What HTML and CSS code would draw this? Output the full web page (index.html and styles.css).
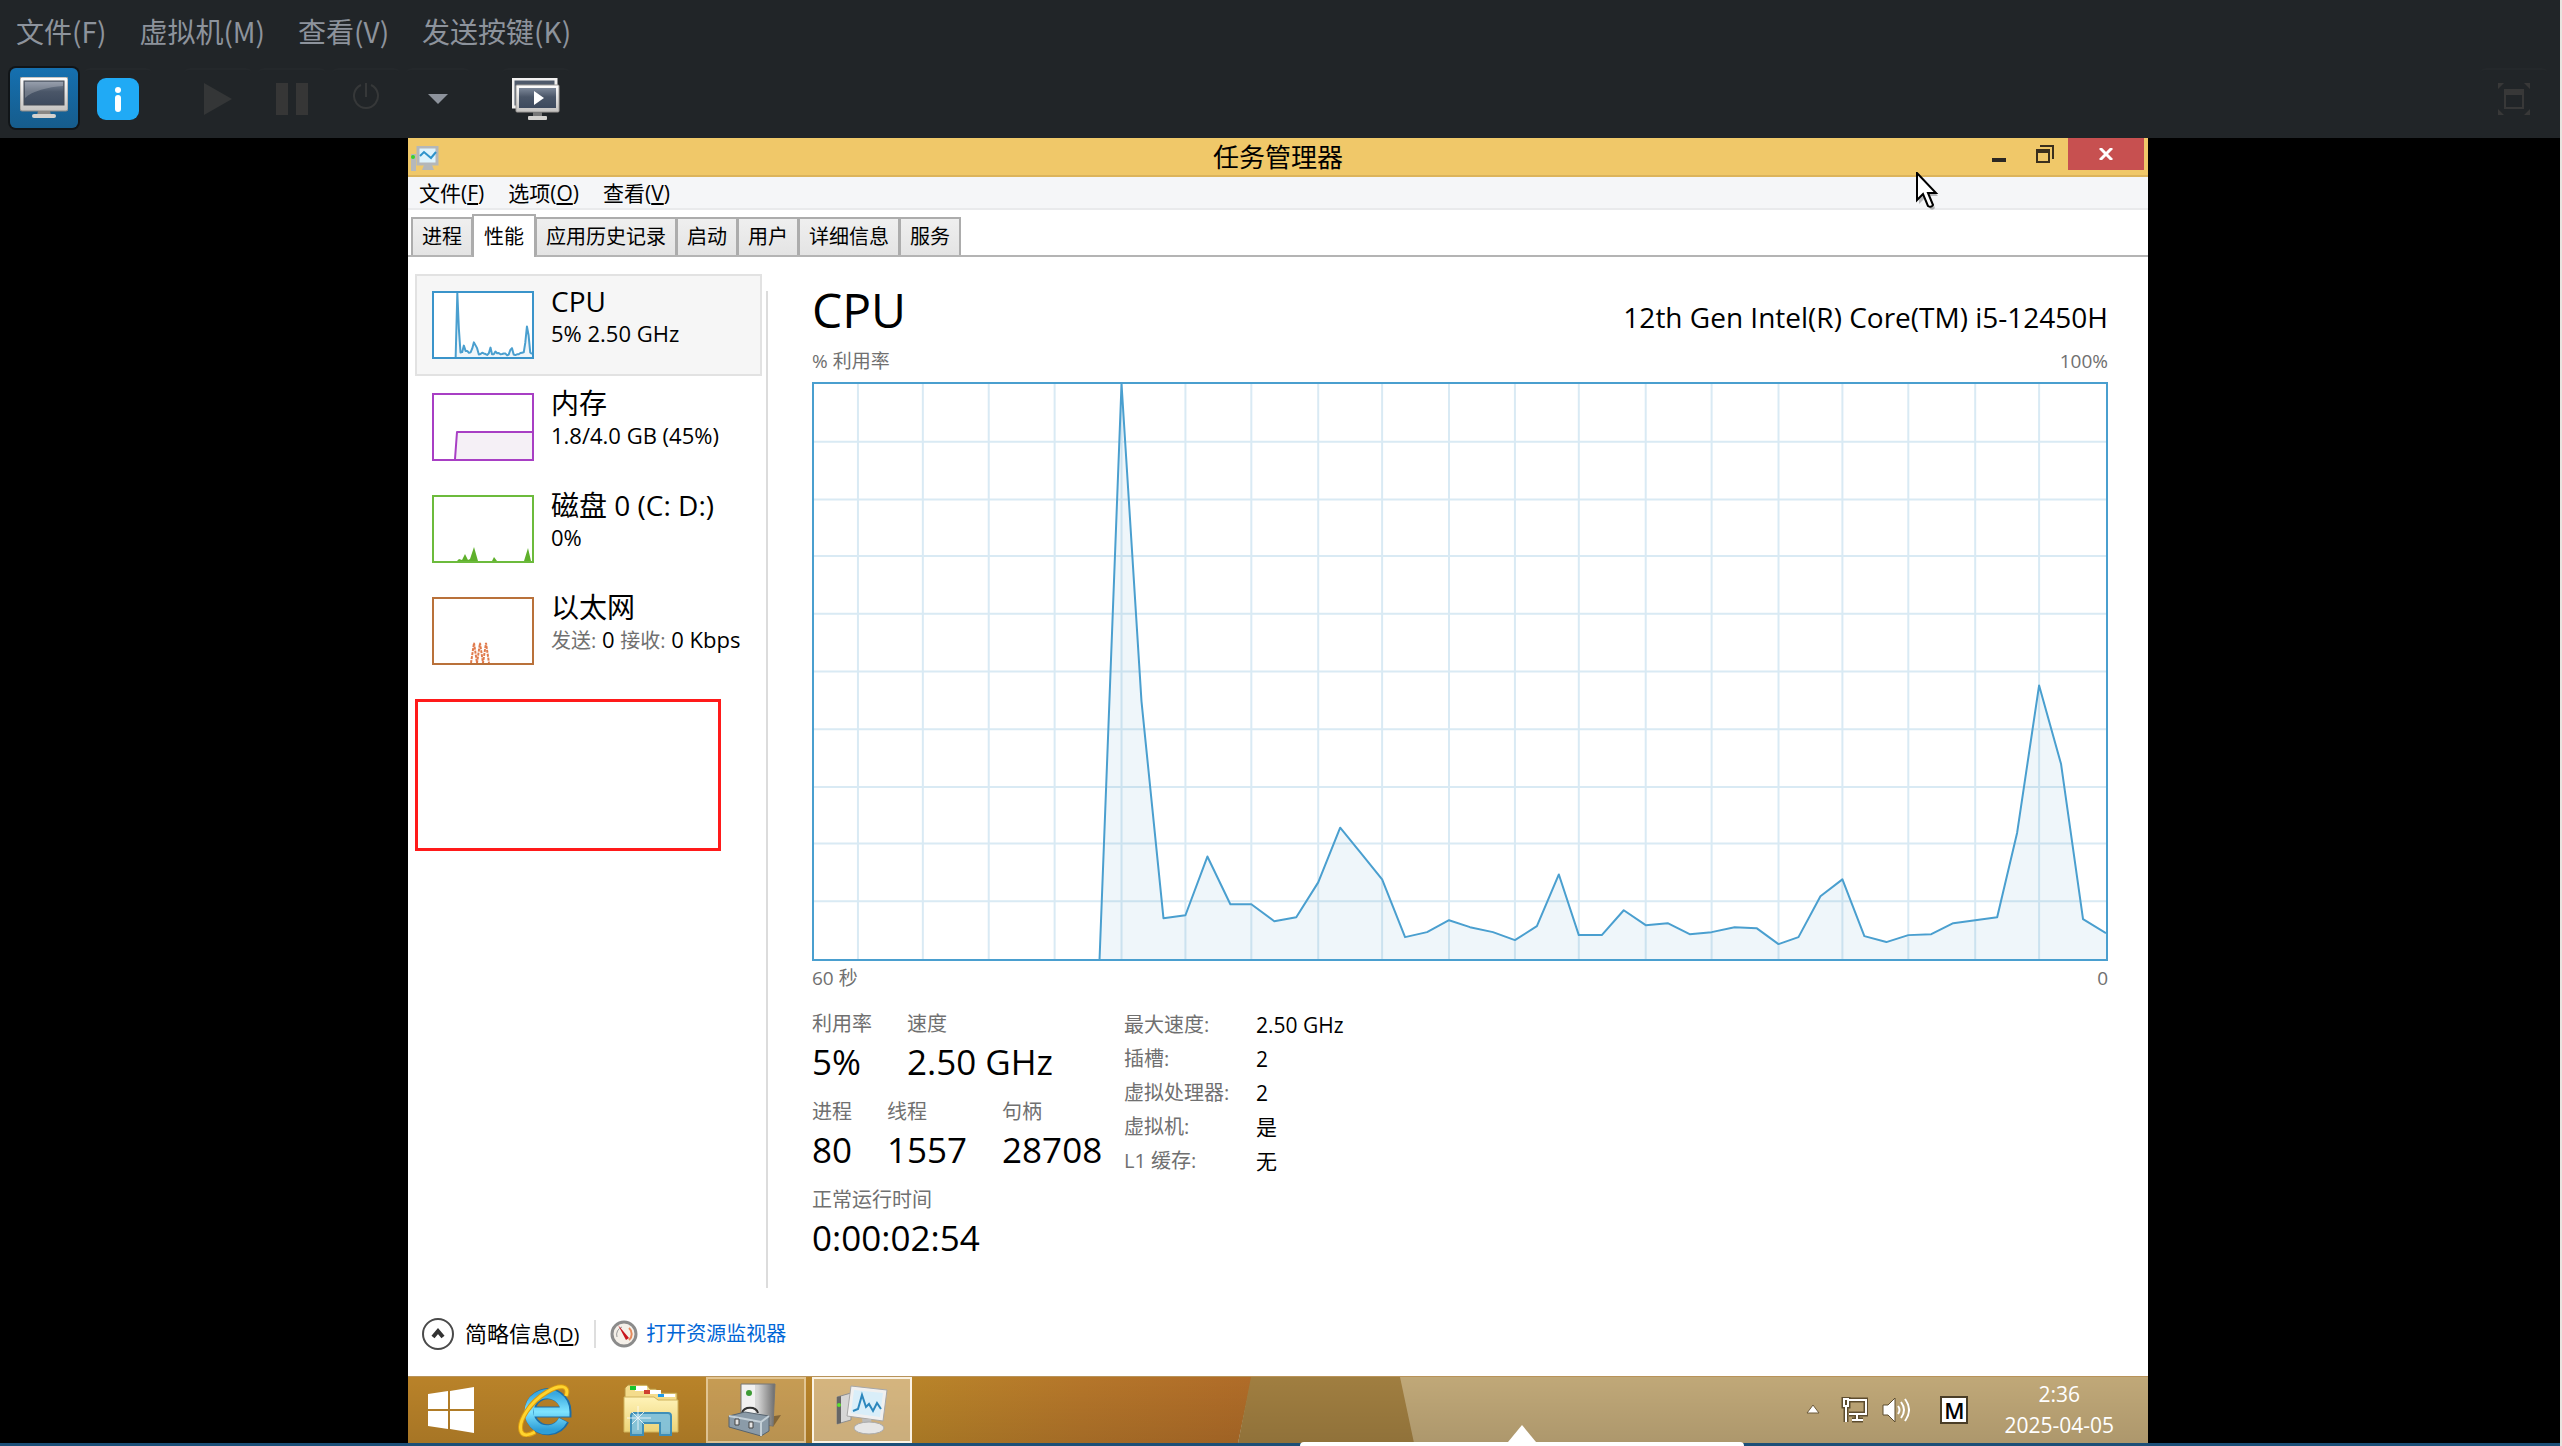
FILE: index.html
```html
<!DOCTYPE html>
<html lang="zh-CN">
<head>
  <meta charset="UTF-8">
  <meta name="viewport" content="width=device-width, initial-scale=1">
  <title>任务管理器</title>
  <link rel="stylesheet" href="styles.css">
</head>
<body>
  <!-- Shared gradients and the CPU curve -->
  <svg class="defs" aria-hidden="true">
    <defs>
      <linearGradient id="frame" x1="0" y1="0" x2="0" y2="1"><stop offset="0" stop-color="#ffffff"/><stop offset="1" stop-color="#c4c2c0"/></linearGradient>
      <linearGradient id="screen" x1="0" y1="0" x2="0" y2="1"><stop offset="0" stop-color="#7d8899"/><stop offset=".45" stop-color="#4a5668"/><stop offset="1" stop-color="#3d4a5e"/></linearGradient>
      <linearGradient id="ie" x1="0" y1="0" x2="0" y2="1"><stop offset="0" stop-color="#39a8e0"/><stop offset=".5" stop-color="#7fe4ff"/><stop offset="1" stop-color="#2f9fd8"/></linearGradient>
      <linearGradient id="folder" x1="0" y1="0" x2="0" y2="1"><stop offset="0" stop-color="#fff3b8"/><stop offset="1" stop-color="#ecd377"/></linearGradient>
      <linearGradient id="metal" x1="0" y1="0" x2="1" y2="0"><stop offset="0" stop-color="#f2f2f2"/><stop offset=".5" stop-color="#d4d4d4"/><stop offset="1" stop-color="#6c6c6c"/></linearGradient>
      <g id="cpu-curve">
        <polygon class="area" points="286,578 308,0 328,319 350,537 372,534 394,475 417,523 438,523 461,540 483,536 505,501 527,446 549,473 569,498 592,556 614,551 636,539 657,546 680,551 702,559 724,545 746,493 766,554 789,554 811,529 833,544 855,542 877,553 899,551 922,546 944,547 966,563 986,556 1008,515 1030,498 1052,555 1074,561 1096,554 1119,553 1141,542 1163,539 1185,536 1205,451 1227,303 1249,382 1271,538 1294,552 1294,578"/>
        <polyline class="line" points="286,578 308,0 328,319 350,537 372,534 394,475 417,523 438,523 461,540 483,536 505,501 527,446 549,473 569,498 592,556 614,551 636,539 657,546 680,551 702,559 724,545 746,493 766,554 789,554 811,529 833,544 855,542 877,553 899,551 922,546 944,547 966,563 986,556 1008,515 1030,498 1052,555 1074,561 1096,554 1119,553 1141,542 1163,539 1185,536 1205,451 1227,303 1249,382 1271,538 1294,552"/>
      </g>
    </defs>
  </svg>

  <header class="host">
    <nav class="host-menu">
      <button>文件(F)</button>
      <button>虚拟机(M)</button>
      <button>查看(V)</button>
      <button>发送按键(K)</button>
    </nav>
    <div class="host-tools">
      <button class="tool active" aria-label="控制台">
        <svg width="48" height="42" viewBox="0 0 48 42"><rect x="0" y="0" width="48" height="34" rx="2" fill="url(#frame)" stroke="#8d8a86"/><rect x="4" y="4" width="40" height="24" fill="url(#screen)" stroke="#454b55"/><path d="M5 5h38v4C28 10 12 14 5 21z" fill="#fff" opacity=".22"/><path d="M18 34h12l1 4H17z" fill="#8a8784"/><rect x="12" y="37" width="24" height="4" rx="2" fill="#d3d1ce"/></svg>
      </button>
      <button class="tool" aria-label="详情">
        <svg width="42" height="42" viewBox="0 0 42 42"><rect width="42" height="42" rx="9" fill="#20aaf5"/><circle cx="21" cy="12" r="3" fill="#fff"/><path d="M21 20v11" stroke="#fff" stroke-width="6" stroke-linecap="round"/></svg>
      </button>
      <button class="tool gap" aria-label="运行">
        <svg width="28" height="32" viewBox="0 0 28 32"><path d="M0 0l28 16L0 32z" fill="#343637"/></svg>
      </button>
      <button class="tool" aria-label="暂停">
        <svg width="32" height="32" viewBox="0 0 32 32"><path d="M0 0h12v32H0zM20 0h12v32H20z" fill="#363636"/></svg>
      </button>
      <button class="tool power" aria-label="关机">
        <svg width="28" height="28" viewBox="0 0 28 28" fill="none" stroke="#363839" stroke-width="2"><path d="M14 1v14M9 3a12 12 0 1 0 10 0"/></svg>
      </button>
      <button class="tool arrow" aria-label="关机菜单">
        <svg width="20" height="10" viewBox="0 0 20 10"><path d="M0 0h20L10 10z" fill="#8d939c"/></svg>
      </button>
      <button class="tool gap" aria-label="快照">
        <svg width="48" height="42" viewBox="0 0 48 42"><rect x="1" y="1" width="43" height="28" fill="#4f5a6b" stroke="#f1f0ef" stroke-width="3"/><rect x="4" y="7" width="43" height="27" rx="1" fill="url(#frame)" stroke="#9d9a97"/><rect x="7" y="10" width="37" height="20" fill="url(#screen)"/><path d="M22 13l10 7-10 7z" fill="#fff"/><path d="M21 34h9v4h-9z" fill="#777"/><rect x="16" y="38" width="19" height="4" rx="1" fill="#d3d1ce"/></svg>
      </button>
      <button class="tool last" aria-label="全屏">
        <svg width="32" height="32" viewBox="0 0 32 32" fill="#383838"><path d="M0 0h6L0 6zM26 0h6v6zM0 26l6 6H0zM32 26v6h-6z"/><path fill-rule="evenodd" d="M6 6h20v20H6zM8 12v12h16V12z"/></svg>
      </button>
    </div>
  </header>

  <main class="stage">
    <div class="vm">
      <div class="titlebar">
        <svg class="app-icon" width="28" height="26" viewBox="0 0 28 26"><rect x="0" y="8" width="5" height="17" fill="#b5b8ba"/><circle cx="2" cy="11" r="2" fill="#37d12c"/><rect x="7" y="1" width="19" height="17" fill="#dff3fc" stroke="#b4b7b9" stroke-width="3"/><path d="M9 10l4-4 7 6 5-6" fill="none" stroke="#2e93cb" stroke-width="2"/><path d="M13 19h8l2 5H11z" fill="#b4b7b9"/></svg>
        <h1>任务管理器</h1>
        <div class="win-buttons">
          <button aria-label="最小化"><svg width="14" height="20" viewBox="0 0 14 20"><path d="M0 14h14v4H0z" fill="#2b2723"/></svg></button>
          <button aria-label="还原"><svg width="18" height="18" viewBox="0 0 18 18" fill="none" stroke="#3a2f1d" stroke-width="2"><path d="M4 1h13v13"/><path d="M1 5h12v12H1zM1 7h12"/></svg></button>
          <button class="close" aria-label="关闭"><svg width="14" height="12" viewBox="0 0 14 12"><path d="M1 0l12 12M13 0L1 12" stroke="#fff" stroke-width="3"/></svg></button>
        </div>
      </div>
      <nav class="menubar">
        <button>文件(<u>F</u>)</button>
        <button>选项(<u>O</u>)</button>
        <button>查看(<u>V</u>)</button>
      </nav>
      <div class="tabs" role="tablist">
        <button role="tab">进程</button>
        <button role="tab" class="selected" aria-selected="true">性能</button>
        <button role="tab">应用历史记录</button>
        <button role="tab">启动</button>
        <button role="tab">用户</button>
        <button role="tab">详细信息</button>
        <button role="tab">服务</button>
      </div>

      <div class="content">
        <aside class="sidebar">
          <button class="item current">
            <svg class="mini cpu" viewBox="0 0 1294 578" preserveAspectRatio="none"><use href="#cpu-curve"/></svg>
            <span class="info"><span class="name">CPU</span><span class="detail">5% 2.50 GHz</span></span>
          </button>
          <button class="item">
            <svg class="mini mem" viewBox="0 0 98 64"><path class="area" d="M21 64l2-27h75v27z"/><path class="line" d="M21 64l2-27h75"/></svg>
            <span class="info"><span class="name">内存</span><span class="detail">1.8/4.0 GB (45%)</span></span>
          </button>
          <button class="item">
            <svg class="mini disk" viewBox="0 0 98 64"><path class="spikes" d="M23 64l2-2 3 1 3-6 3 6 2-1 4-12 4 14zM58 64l2-4 3 4zM90 64l4-13 3 13z"/></svg>
            <span class="info"><span class="name">磁盘 0 (C: D:)</span><span class="detail">0%</span></span>
          </button>
          <button class="item">
            <svg class="mini net" viewBox="0 0 98 64"><path class="dots" d="M37 64l3-20 3 20 3-20 3 20 3-20 3 20"/></svg>
            <span class="info"><span class="name">以太网</span><span class="detail"><i>发送:</i> 0 <i>接收:</i> 0 Kbps</span></span>
          </button>
          <div class="marker"></div>
        </aside>

        <section class="panel">
          <div class="heading">
            <h2>CPU</h2>
            <p>12th Gen Intel(R) Core(TM) i5-12450H</p>
          </div>
          <div class="axis top"><span>% 利用率</span><span>100%</span></div>
          <svg class="chart" viewBox="0 0 1294 578" preserveAspectRatio="none">
            <path class="grid" d="M44 0v578M109 0v578M175 0v578M241 0v578M308 0v578M372 0v578M438 0v578M505 0v578M569 0v578M636 0v578M702 0v578M766 0v578M833 0v578M899 0v578M966 0v578M1030 0v578M1096 0v578M1163 0v578M1227 0v578M0 58h1294M0 116h1294M0 173h1294M0 231h1294M0 289h1294M0 347h1294M0 405h1294M0 462h1294M0 520h1294"/>
            <use href="#cpu-curve"/>
          </svg>
          <div class="axis bottom"><span>60 秒</span><span>0</span></div>
          <div class="stats">
            <div class="numbers">
              <dl class="row">
                <div><dt>利用率</dt><dd>5%</dd></div>
                <div><dt>速度</dt><dd>2.50 GHz</dd></div>
              </dl>
              <dl class="row">
                <div><dt>进程</dt><dd>80</dd></div>
                <div><dt>线程</dt><dd>1557</dd></div>
                <div><dt>句柄</dt><dd>28708</dd></div>
              </dl>
              <dl class="row">
                <div><dt>正常运行时间</dt><dd>0:00:02:54</dd></div>
              </dl>
            </div>
            <table class="specs">
              <tr><th scope="row">最大速度:</th><td>2.50 GHz</td></tr>
              <tr><th scope="row">插槽:</th><td>2</td></tr>
              <tr><th scope="row">虚拟处理器:</th><td>2</td></tr>
              <tr><th scope="row">虚拟机:</th><td>是</td></tr>
              <tr><th scope="row">L1 缓存:</th><td>无</td></tr>
            </table>
          </div>
        </section>
      </div>

      <footer class="statusbar">
        <button>
          <svg width="34" height="34" viewBox="0 0 34 34" fill="none"><circle cx="17" cy="17" r="15" stroke="#4a4a4a" stroke-width="2"/><path d="M12 20l5-6 5 6" stroke="#333" stroke-width="4"/></svg>
          <span class="fewer">简略信息<small>(<u>D</u>)</small></span>
        </button>
        <a href="#">
          <svg width="28" height="28" viewBox="0 0 28 28"><circle cx="14" cy="14" r="12" fill="#f4efe8" stroke="#8b8b8b" stroke-width="3"/><path d="M7 17a8 8 0 0 1 5-10" fill="none" stroke="#999"/><path d="M19 8a8 8 0 0 1 0 12" fill="none" stroke="#e58a5c" stroke-width="2"/><path d="M8 5l11 13-3 2z" fill="#c8141c"/></svg>
          <span>打开资源监视器</span>
        </a>
      </footer>

      <div class="taskbar">
        <svg class="wallpaper" viewBox="0 0 1740 67" preserveAspectRatio="none">
          <defs>
            <linearGradient id="gold" x1="0" y1="0" x2="1" y2="0"><stop offset="0" stop-color="#b98229"/><stop offset=".6" stop-color="#b98429"/><stop offset=".8" stop-color="#b5762a"/><stop offset="1" stop-color="#b06c28"/></linearGradient>
            <linearGradient id="shade" x1="0" y1="0" x2="0" y2="1"><stop offset="0" stop-opacity="0"/><stop offset="1" stop-opacity=".1"/></linearGradient>
          </defs>
          <path d="M0 0h844l-14 67H0z" fill="url(#gold)"/>
          <path d="M843 0h150l14 67H830z" fill="#a07e40"/>
          <path d="M992 0h748v67H1006z" fill="#c0a878"/>
          <path d="M0 0h1740v67H0z" fill="url(#shade)"/>
        </svg>
        <button class="launch" aria-label="开始">
          <svg width="46" height="46" viewBox="0 0 46 46" fill="#fff"><path d="M0 7l20-3v18H0zM22 4l24-4v22H22zM0 24h20v18L0 39zM22 24h24v22l-24-4z"/></svg>
        </button>
        <button class="launch" aria-label="Internet Explorer">
          <svg width="54" height="54" viewBox="0 0 54 54" fill="none"><path d="M46 37a18 18 0 1 1 2-8H16" stroke="#1c6ea8" stroke-width="11"/><path d="M45 37a18 18 0 1 1 2-8H16" stroke="url(#ie)" stroke-width="9"/><path d="M48 13C52 2 42 1 29 9 12 19 0 38 3 48c2 6 9 4 14 1" stroke="#d99a10" stroke-width="5"/><path d="M48 13C52 2 42 1 29 9 12 19 0 38 3 48c2 6 9 4 14 1" stroke="#ffd42e" stroke-width="3"/></svg>
        </button>
        <button class="launch" aria-label="文件资源管理器">
          <svg width="56" height="52" viewBox="0 0 56 52"><path d="M2 4l3-3h19l3 4h6l3 4h18v8H2z" fill="#f4dc8c" stroke="#b69440"/><path d="M12 2h12v5H12zM26 6h12v4H26zM40 10h12v3H40z" fill="#fff"/><path d="M7 2h6v4H7z" fill="#16c42c"/><path d="M21 6h6v4h-6z" fill="#cf4030"/><path d="M35 10h6v3h-6z" fill="#209ae8"/><path d="M1 13h30l4 3h20v32H1z" fill="url(#folder)" stroke="#d0b35c"/><path d="M8 51V32q0-3 3-3h34q3 0 3 3v19H37V39H20v12z" fill="#79bfdf" fill-opacity=".9" stroke="#3f8fb8" stroke-width="2"/><path d="M15 22v24M4 34h24M9 28l12 12M21 28L9 40" stroke="#fff" opacity=".8"/></svg>
        </button>
        <button class="task" aria-label="服务器管理器">
          <svg width="56" height="54" viewBox="0 0 56 54"><path d="M40 34l13-2-8 12z" fill="#5b4626" opacity=".6"/><path d="M13 1h34l-2 42-32-4z" fill="url(#metal)" stroke="#777"/><path d="M14 2h13v34H14z" fill="#f1f1f1"/><circle cx="21" cy="10" r="3" fill="#3d9b35"/><path d="M14 30c2-7 14-7 16 0" fill="none" stroke="#333" stroke-width="2"/><path d="M1 33l16-4 24 4v15l-8 5L1 44z" fill="#8b9ba8" stroke="#56636e"/><path d="M1 33l32 6 8-6M33 39v14" fill="none" stroke="#c4d0d8" stroke-width="2"/><path d="M7 36h4v6H7zM21 39h4v6h-4z" fill="#e3e3e3" stroke="#444"/></svg>
        </button>
        <button class="task front" aria-label="任务管理器">
          <svg width="54" height="50" viewBox="0 0 54 50"><path d="M2 12l14-4v27L2 39z" fill="#d6d6d6" stroke="#8f8f8f"/><path d="M2 12l4-1v27l-4 1z" fill="#666"/><circle cx="4" cy="20" r="2" fill="#5ee02c"/><path d="M16 1l36 4-4 31-36-5z" fill="#f0f0f0" stroke="#a7a7a7"/><path d="M19 5l29 3-3 24-29-4z" fill="#d9eef9"/><path d="M18 26l5-2 4-14 4 12 3-3 4 7 4-8 4 6" fill="none" stroke="#2c87bd" stroke-width="2"/><path d="M27 34h9l1 6h-9z" fill="#bbb"/><ellipse cx="34" cy="43" rx="15" ry="6" fill="#e6e6e6" stroke="#aaa"/></svg>
        </button>
        <div class="tray">
          <svg width="14" height="10" viewBox="0 0 14 10"><path d="M7 0l6 8H1z" fill="#fff" stroke="#6c5a3a"/></svg>
          <svg class="net-icon" width="28" height="26" viewBox="0 0 28 26" fill="none"><path d="M9 3h17v14H9M17 17v6M12 23h11M4 2h4v7H4zM6 9v16" stroke="#5d4c2e" stroke-width="5"/><path d="M9 3h17v14H9M17 17v6M12 23h11M4 2h4v7H4zM6 9v16" stroke="#fff" stroke-width="2"/></svg>
          <svg width="28" height="26" viewBox="0 0 28 26" fill="none"><path d="M1 8h5l7-7v24l-7-7H1z" fill="#fff" stroke="#5d4c2e"/><path d="M16 9q3 4 0 8M19 5q6 8 0 16M23 2q8 11 0 22" stroke="#fff" stroke-width="2"/></svg>
          <span class="ime">M</span>
          <time class="clock" datetime="2025-04-05T02:36"><span>2:36</span><span>2025-04-05</span></time>
        </div>
      </div>

      <svg class="cursor" width="26" height="42" viewBox="0 0 26 42"><path d="M3 4v28l6-6 5 11q3 2 5-1l-5-12h8z" fill="#000" opacity=".25"/><path d="M1 1v27l6-6 5 12q3 2 5-1l-5-12h8z" fill="#fff" stroke="#000" stroke-width="2"/></svg>
      <div class="popover"></div>
    </div>
  </main>
</body>
</html>
```

FILE: styles.css
```css
* { margin: 0; padding: 0; box-sizing: border-box; }
body {
  font-family: 'Open Sans', 'Noto Sans CJK SC', sans-serif;
  display: flex;
  flex-direction: column;
  height: 100vh;
  background: #000;
  border-right: 2px solid #e8e5e0;
  overflow: hidden;
}
button {
  font: inherit;
  color: inherit;
  background: none;
  border: none;
}
svg { display: block; flex: none; }
i { font-style: normal; }
u { text-underline-offset: 2px; }
.defs { position: absolute; width: 0; height: 0; }

/* Viewer menu and toolbar */
.host {
  flex: none;
  background: #212528;
  color: #8d939c;
}
.host-menu {
  display: flex;
  gap: 33px;
  height: 62px;
  padding: 0 16px;
  align-items: center;
  font-family: 'Noto Sans CJK SC', sans-serif;
  font-size: 28px;
  line-height: 40px;
}
.host-tools {
  display: flex;
  gap: 6px;
  height: 76px;
  padding: 6px 10px 0;
  align-items: flex-start;
}
.tool {
  display: flex;
  align-items: center;
  justify-content: center;
  width: 68px;
  height: 60px;
  border-radius: 6px;
  border-top: 2px solid #24282b;
}
.tool.active {
  background: linear-gradient(#1570b0, #165c8c);
  border: none;
  box-shadow: 0 0 0 2px #111518;
}
.tool.gap { margin-left: 26px; }
.tool.arrow { width: 64px; }
.tool.last { margin-left: auto; margin-right: 2px; }
.tool.power { padding-bottom: 6px; }

/* Guest screen keeps 4:3 */
.stage {
  flex: 1;
  min-height: 0;
  display: flex;
  justify-content: center;
  padding-right: 4px;
  border-bottom: 3px solid #1c4f78;
}
.vm {
  position: relative;
  display: flex;
  flex-direction: column;
  height: 100%;
  aspect-ratio: 4 / 3;
  background: #fff;
  color: #000;
}

.titlebar {
  display: flex;
  align-items: center;
  height: 39px;
  background: #f0c869;
  border-bottom: 2px solid #dcb45c;
  position: relative;
}
.app-icon { margin-left: 3px; margin-top: 4px; }
.titlebar h1 {
  position: absolute;
  left: 0;
  right: 0;
  text-align: center;
  font-size: 26px;
  font-weight: 400;
  line-height: 36px;
}
.win-buttons {
  display: flex;
  margin-left: auto;
  align-self: flex-start;
  padding-right: 4px;
  z-index: 1;
}
.win-buttons button {
  display: flex;
  align-items: center;
  justify-content: center;
  width: 46px;
  height: 32px;
}
.win-buttons .close {
  width: 76px;
  background: #c75050;
}

.menubar {
  display: flex;
  gap: 24px;
  height: 33px;
  padding: 1px 11px 0;
  align-items: center;
  background: #f5f6f8;
  border-bottom: 2px solid #e9eaec;
  font-size: 21px;
  line-height: 28px;
}

.tabs {
  display: flex;
  align-items: flex-end;
  height: 47px;
  padding-left: 3px;
  border-bottom: 2px solid #b4b4b4;
  font-size: 20px;
  line-height: 28px;
}
.tabs button {
  height: 38px;
  padding: 0 9px;
  background: linear-gradient(#efefef, #e4e4e4);
  border: 2px solid #acacac;
  border-bottom: none;
}
.tabs button + button { margin-left: -1px; }
.tabs .selected {
  height: 43px;
  padding: 0 10px;
  margin-bottom: -2px;
  background: #fff;
}

.content {
  flex: 1;
  display: flex;
  min-height: 0;
}
.sidebar {
  width: 360px;
  padding: 17px 6px 0 7px;
  position: relative;
}
.sidebar::after {
  content: "";
  position: absolute;
  right: 0;
  top: 34px;
  bottom: 4px;
  border-right: 2px solid #dcdcdc;
}
.item {
  display: flex;
  gap: 17px;
  width: 100%;
  height: 102px;
  padding: 15px 0 15px 15px;
  border: 2px solid transparent;
  text-align: left;
}
.item.current {
  background: #f6f6f6;
  border-color: #e2e2e2;
}
.mini {
  width: 102px;
  height: 68px;
  background: #fff;
  border: 2px solid;
}
.info { display: flex; flex-direction: column; margin-top: -7px; }
.name { font-size: 28px; line-height: 35px; white-space: nowrap; }
.detail { font-size: 22px; line-height: 28px; white-space: nowrap; }
.detail i { font-size: 20px; color: #707070; }
.marker {
  width: 306px;
  height: 152px;
  margin-top: 17px;
  border: 3px solid #ff1a1a;
}

/* Charts */
.area { fill: #1a7ab9; fill-opacity: .07; }
.line {
  fill: none;
  stroke: #4a9fcf;
  stroke-width: 2;
  stroke-linejoin: round;
  vector-effect: non-scaling-stroke;
}
.grid { fill: none; stroke: #d9eaf4; stroke-width: 2; vector-effect: non-scaling-stroke; }
.cpu { border-color: #3a94ca; }
.mem { border-color: #a83fc4; }
.mem .line { stroke: #a83fc4; }
.mem .area { fill: #8b5a9b; fill-opacity: .09; }
.disk { border-color: #6cbb3c; }
.spikes { fill: #5fb02c; }
.net { border-color: #b9713a; }
.dots { fill: none; stroke: #e07a4c; stroke-width: 2; stroke-dasharray: 3 1; }

.panel {
  flex: 1;
  display: flex;
  flex-direction: column;
  padding: 23px 40px 20px 44px;
}
.heading {
  display: flex;
  justify-content: space-between;
  align-items: baseline;
  height: 60px;
}
.heading h2 { font-size: 48px; font-weight: 400; line-height: 60px; }
.heading p { font-size: 28px; line-height: 36px; }
.axis {
  display: flex;
  justify-content: space-between;
  font-size: 19px;
  color: #707070;
}
.axis.top { line-height: 42px; }
.axis.bottom { line-height: 35px; }
.chart {
  flex: 1;
  width: 100%;
  min-height: 0;
  border: 2px solid #4a9fcf;
}

.stats { display: flex; margin-top: 12px; }
.numbers { width: 312px; }
.row { display: flex; gap: 35px; height: 88px; }
.row dt { font-size: 20px; line-height: 32px; color: #707070; }
.row dd { font-size: 35px; line-height: 44px; white-space: nowrap; }
.specs {
  border-collapse: collapse;
  align-self: flex-start;
  font-size: 21px;
  line-height: 34px;
}
.specs th {
  width: 132px;
  font-size: 20px;
  font-weight: 400;
  text-align: left;
  color: #707070;
}

.statusbar {
  display: flex;
  align-items: center;
  height: 84px;
  padding-left: 13px;
}
.statusbar button {
  display: flex;
  align-items: center;
  gap: 10px;
  padding-right: 15px;
}
.statusbar a {
  display: flex;
  align-items: center;
  gap: 8px;
  padding-left: 14px;
  border-left: 2px solid #dedede;
  font-size: 20px;
  line-height: 26px;
  color: #0066d6;
  text-decoration: none;
}
.fewer { font-size: 22px; line-height: 30px; }
.fewer small { font-size: 20px; }

/* Guest taskbar */
.taskbar {
  position: relative;
  display: flex;
  align-items: center;
  height: 67px;
  border-top: 1px solid #b8935a;
}
.taskbar > * { position: relative; }
.taskbar .wallpaper {
  position: absolute;
  inset: 0;
  width: 100%;
  height: 100%;
}
.launch {
  display: flex;
  align-items: center;
  justify-content: center;
  width: 100px;
}
.launch:nth-of-type(1) { width: 86px; }
.launch:nth-of-type(2) { width: 102px; }
.launch:nth-of-type(3) { width: 110px; }
.task {
  display: flex;
  align-items: center;
  justify-content: center;
  width: 100px;
  height: 66px;
  margin-right: 6px;
  background: rgba(255, 255, 255, .2);
  border: 2px solid rgba(255, 240, 210, .5);
}
.task.front {
  background: rgba(255, 255, 255, .4);
  border-color: #fbf3e4;
}
.tray {
  display: flex;
  align-items: center;
  margin-left: auto;
  padding-right: 34px;
  color: #fff;
}
.net-icon { margin: 0 14px 0 20px; }
.ime {
  width: 28px;
  margin: 0 36px 0 30px;
  background: #fff;
  border: 2px solid #4a3d26;
  color: #000;
  font-size: 22px;
  font-weight: 600;
  line-height: 24px;
  text-align: center;
}
.clock {
  display: flex;
  flex-direction: column;
  text-align: center;
  font-size: 21px;
  line-height: 31px;
}

.cursor {
  position: absolute;
  left: 1508px;
  top: 34px;
}
.popover {
  position: absolute;
  left: 892px;
  bottom: -3px;
  width: 444px;
  height: 4px;
  background: #fff;
  border-radius: 4px 4px 0 0;
}
.popover::before {
  content: "";
  position: absolute;
  left: 208px;
  bottom: 4px;
  border: 14px solid transparent;
  border-top: none;
  border-bottom: 17px solid #fff;
}
```
